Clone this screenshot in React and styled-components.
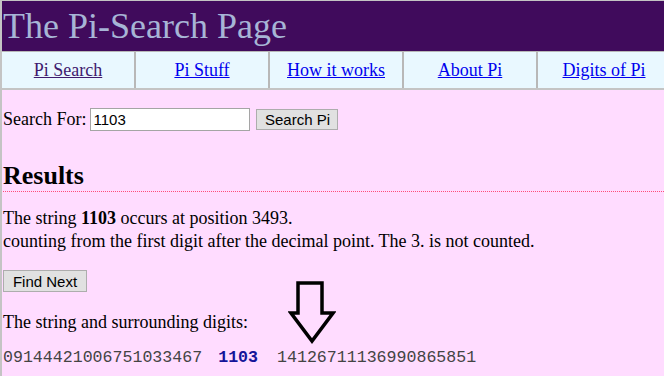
import React from 'react';
import styled, { createGlobalStyle } from 'styled-components';

const Global = createGlobalStyle`
  html, body {
    margin: 0;
    padding: 0;
    background: #ffdcff;
    font-family: "Liberation Serif", "Times New Roman", serif;
    color: #000;
    overflow: hidden;
  }
`;

const Frame = styled.div`
  position: relative;
  min-height: 375px;
  border-left: 2px solid #c4c4c4;
  border-top: 1px solid #c4c4c4;
`;

const Banner = styled.header`
  background: #400b5c;
  height: 50px;
  line-height: 50px;
  font-size: 36px;
  color: #a7b5d6;
  padding-left: 1px;
  white-space: nowrap;
`;

const Nav = styled.nav`
  display: grid;
  grid-template-columns: repeat(5, 134px);
  border-top: 1px solid #b8b8b8;
  border-bottom: 2px solid #c4c4c4;
  background: #e9f8ff;
`;

const NavCell = styled.div`
  height: 36px;
  line-height: 36px;
  text-align: center;
  font-size: 18px;
  border-right: 2px solid #b8b8b8;
  a {
    color: ${p => (p.visited ? '#3f1a6e' : '#0000ee')};
    text-decoration: underline;
  }
`;

const Main = styled.main`
  padding-left: 1px;
  font-size: 18px;
`;

const SearchRow = styled.form`
  display: flex;
  align-items: center;
  margin-top: 18px;
  line-height: 21px;
`;

const Field = styled.input`
  box-sizing: border-box;
  width: 160px;
  height: 23px;
  margin: 0 0 0 4px;
  padding: 0 2px;
  border: 1px solid #a5a5a5;
  background: #fff;
  font-family: "Liberation Sans", Arial, sans-serif;
  font-size: 15px;
  color: #000;
`;

const Button = styled.button`
  box-sizing: border-box;
  height: ${p => p.h || 21}px;
  width: ${p => p.w}px;
  margin-left: ${p => p.ml || 0}px;
  margin-top: ${p => p.mt || 0}px;
  padding: 0;
  display: block;
  background: #e1e1e1;
  border: 1px solid #adadad;
  font-family: "Liberation Sans", Arial, sans-serif;
  font-size: 15px;
  color: #000;
`;

const Heading = styled.h2`
  margin: 30px 0 0;
  font-size: 26px;
  line-height: 30px;
  font-weight: bold;
  border-bottom: 1px dotted #ff4d79;
`;

const Para = styled.p`
  margin: ${p => p.mt}px 0 0;
  line-height: 23px;
`;

const Digits = styled.div`
  margin-top: 14px;
  font-family: "Liberation Mono", "Courier New", monospace;
  font-size: 16.6px;
  line-height: 20px;
  color: #444;
  white-space: pre;
`;

const Hit = styled.b`
  color: #14149a;
  margin: 0 19px 0 16px;
`;

const Arrow = styled.svg`
  position: absolute;
  left: 286px;
  top: 278px;
`;

const links = ['Pi Search', 'Pi Stuff', 'How it works', 'About Pi', 'Digits of Pi'];

export default function App() {
  return (
    <Frame>
      <Global />
      <Banner>The Pi-Search Page</Banner>
      <Nav>
        {links.map((l, i) => (
          <NavCell key={l} visited={i === 0}>
            <a href="#">{l}</a>
          </NavCell>
        ))}
      </Nav>
      <Main>
        <SearchRow onSubmit={e => e.preventDefault()}>
          <span>Search For:</span>
          <Field defaultValue="1103" />
          <Button w={82} ml={6}>Search Pi</Button>
        </SearchRow>
        <Heading>Results</Heading>
        <Para mt={15}>
          The string <b>1103</b> occurs at position 3493.
          <br />
          counting from the first digit after the decimal point. The 3. is not counted.
        </Para>
        <Button w={84} h={22} mt={17}>Find Next</Button>
        <Para mt={19}>The string and surrounding digits:</Para>
        <Digits>
          09144421006751033467<Hit>1103</Hit>14126711136990865851
        </Digits>
      </Main>
      <Arrow width="48" height="66" viewBox="0 0 48 66">
        <polygon
          points="10,4 34,4 34,34 45,34 24,62 3,34 10,34"
          fill="none"
          stroke="#000"
          strokeWidth="3.5"
          strokeLinejoin="miter"
        />
      </Arrow>
    </Frame>
  );
}
